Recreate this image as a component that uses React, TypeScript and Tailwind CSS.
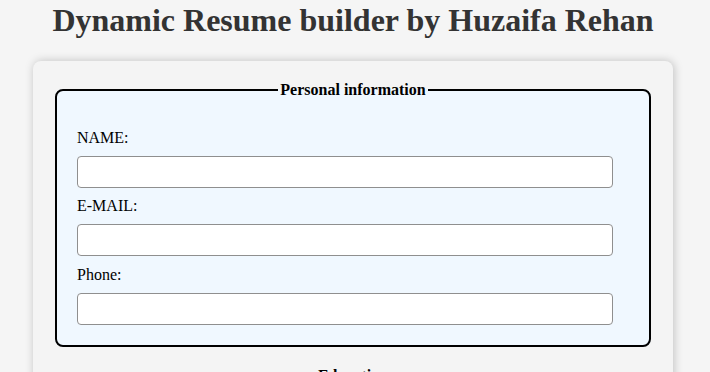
import React from "react";

const serif = { fontFamily: '"Liberation Serif", "Times New Roman", serif' };

function Field({ label, type = "text" }: { label: string; type?: string }) {
  return (
    <div className="flex flex-col">
      <label className="block text-[16px] leading-[18.4px] mt-[9.5px] mb-[8.6px] text-black">
        {label}
      </label>
      <input
        type={type}
        className="w-[536px] h-[32px] bg-white border border-[#8f8f8f] rounded-[4px] px-[5px] outline-none"
      />
    </div>
  );
}

export default function App() {
  return (
    <main className="min-h-screen bg-[#f5f5f5] overflow-hidden" style={serif}>
      <div className="w-[640px] ml-[33px]">
        <h1 className="pt-[2px] mb-[22px] text-center text-[32px] leading-[37px] font-bold text-[#333333]">
          Dynamic Resume builder by Huzaifa Rehan
        </h1>
        <div className="bg-[#f4f4f4] rounded-[8px] shadow-[1px_0_10px_rgba(0,0,0,0.22)] p-[20px]">
          <fieldset className="mx-[2px] mb-[20px] border-2 border-black rounded-[8px] bg-[#f0f8ff] px-[20px] pt-[20px] pb-[20px]">
            <legend className="mx-auto px-[2px] text-[16px] leading-[18.4px] font-bold text-black">
              Personal information
            </legend>
            <div className="flex flex-col">
              <Field label="NAME:" />
              <Field label="E-MAIL:" type="email" />
              <Field label="Phone:" type="tel" />
            </div>
          </fieldset>
          <fieldset className="mx-[2px] border-2 border-black rounded-[8px] bg-[#f0f8ff] px-[20px] pt-[20px] pb-[20px]">
            <legend className="mx-auto px-[2px] text-[16px] leading-[18.4px] font-bold text-black">
              Education
            </legend>
            <div className="flex flex-col">
              <Field label="Degree:" />
              <Field label="Institution:" />
            </div>
          </fieldset>
        </div>
      </div>
    </main>
  );
}
